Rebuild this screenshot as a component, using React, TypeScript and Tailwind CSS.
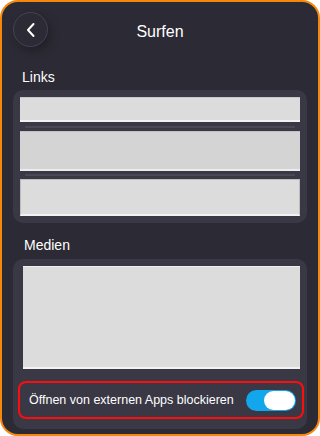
import React from "react";

export default function App() {
  return (
    <div className="w-[320px] h-[436px] bg-white" style={{ fontFamily: '"Liberation Sans", Arial, sans-serif' }}>
      <div className="w-[320px] h-[436px] rounded-[18px] border-[2px] border-[#f7860c] bg-[#2c2a34] flex flex-col overflow-hidden">
        {/* Header */}
        <div className="relative h-[56px] flex items-center justify-center">
          <button className="absolute left-[11px] top-[10px] w-[35px] h-[35px] rounded-full border border-[#464453] bg-[#2c2a34] flex items-center justify-center shadow-[3px_4px_10px_rgba(0,0,0,0.28)]">
            <svg width="12" height="16" viewBox="0 0 12 16" fill="none">
              <path d="M8.5 2 L3 8 L8.5 14" stroke="white" strokeWidth="2" strokeLinecap="round" strokeLinejoin="round" />
            </svg>
          </button>
          <div className="text-white text-[16px] leading-none pt-[4px]">Surfen</div>
        </div>

        {/* Links */}
        <div className="pl-[20px] text-white text-[14px] leading-[20px] mt-[9px]">Links</div>
        <div className="mx-[11px] mt-[3px] rounded-[10px] bg-[#3a3845] px-[7px] py-[7px] flex flex-col">
          <div className="h-[25px] bg-[#dcdcdc] border-t border-t-[#c9c9c9] border-b-2 border-b-[#f2f2f2]" />
          <div className="h-[9px] flex items-center px-[5px]">
            <div className="h-[2px] w-full bg-[#4a4856]" />
          </div>
          <div className="h-[40px] bg-[#d4d4d4] border-t border-t-[#c2c2c2] border-b-2 border-b-[#ececec]" />
          <div className="h-[8px] flex items-center px-[5px]">
            <div className="h-[2px] w-full bg-[#4a4856]" />
          </div>
          <div className="h-[37px] bg-[#dcdcdc] border border-[#bdbdbd] border-b-2 border-b-[#f2f2f2]" />
        </div>

        {/* Medien */}
        <div className="pl-[22px] text-white text-[14px] leading-[20px] mt-[12px]">Medien</div>
        <div className="mx-[11px] mt-[4px] rounded-[10px] bg-[#3a3845] pt-[7px] pb-[10px] pl-[5px] pr-[3px] flex flex-col">
          <div className="ml-[5px] mr-[4px] h-[103px] bg-[#dcdcdc] border-t border-t-[#f0f0f0] border-b-2 border-b-[#f2f2f2]" />
          <div className="mt-[12px] h-[38px] rounded-[8px] border-2 border-[#ff0d0d] flex items-center justify-between pl-[9px] pr-[6px]">
            <span className="text-white text-[12.5px]">Öffnen von externen Apps blockieren</span>
            <div className="w-[50px] h-[21px] rounded-full bg-[#12a6ec] flex items-center justify-end pr-[1px]">
              <div className="w-[31px] h-[19px] rounded-full bg-white" />
            </div>
          </div>
        </div>
      </div>
    </div>
  );
}
